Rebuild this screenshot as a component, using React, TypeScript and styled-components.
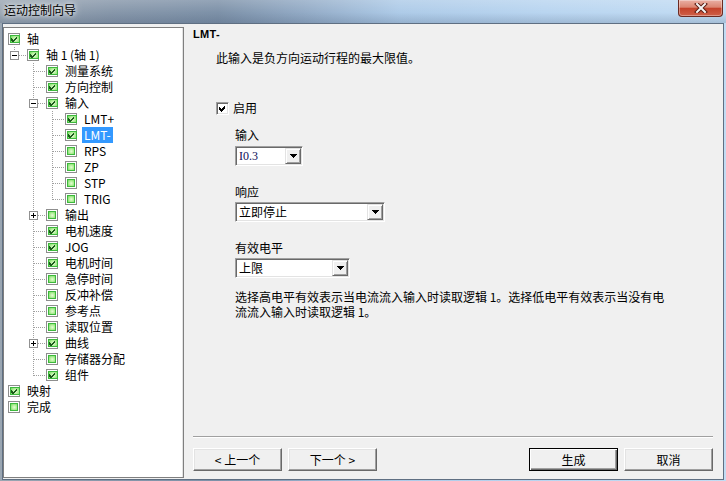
import React from "react";
import styled, { createGlobalStyle, css } from "styled-components";

const GlobalStyle = createGlobalStyle`
  html, body {
    margin: 0;
    padding: 0;
  }
  body {
    width: 726px;
    height: 481px;
    overflow: hidden;
    font-family: "Noto Sans CJK SC", "Liberation Sans", sans-serif;
    font-size: 12px;
    color: #000;
  }
`;

type TreeNode = {
  label: string;
  level: number;
  checked: boolean;
  exp?: "+" | "-";
  selected?: boolean;
};

const nodes: TreeNode[] = [
  { label: "轴", level: 0, checked: true },
  { label: "轴 1 (轴 1)", level: 1, checked: true, exp: "-" },
  { label: "测量系统", level: 2, checked: true },
  { label: "方向控制", level: 2, checked: true },
  { label: "输入", level: 2, checked: true, exp: "-" },
  { label: "LMT+", level: 3, checked: true },
  { label: "LMT-", level: 3, checked: true, selected: true },
  { label: "RPS", level: 3, checked: false },
  { label: "ZP", level: 3, checked: false },
  { label: "STP", level: 3, checked: false },
  { label: "TRIG", level: 3, checked: false },
  { label: "输出", level: 2, checked: false, exp: "+" },
  { label: "电机速度", level: 2, checked: true },
  { label: "JOG", level: 2, checked: true },
  { label: "电机时间", level: 2, checked: true },
  { label: "急停时间", level: 2, checked: false },
  { label: "反冲补偿", level: 2, checked: false },
  { label: "参考点", level: 2, checked: false },
  { label: "读取位置", level: 2, checked: false },
  { label: "曲线", level: 2, checked: true, exp: "+" },
  { label: "存储器分配", level: 2, checked: false },
  { label: "组件", level: 2, checked: true },
  { label: "映射", level: 0, checked: true },
  { label: "完成", level: 0, checked: false },
];

// true when a later row sits at the same level before the branch closes
const hasNextSibling = (i: number, lvl: number) => {
  for (let j = i + 1; j < nodes.length; j++) {
    if (nodes[j].level < lvl) return false;
    if (nodes[j].level === lvl) return true;
  }
  return false;
};

const App = () => {
  return (
    <>
      <GlobalStyle />
      <Window>
        <TitleBar>
          <Title>运动控制向导</Title>
          <CloseButton>
            <svg width="14" height="10" viewBox="0 0 14 10">
              <path d="M3 1 L11 9 M11 1 L3 9" stroke="#5b1d14" strokeWidth="4" strokeLinecap="square" />
              <path d="M3 1 L11 9 M11 1 L3 9" stroke="#f4f4f4" strokeWidth="2" strokeLinecap="square" />
            </svg>
          </CloseButton>
        </TitleBar>

        <Client>
          <Tree>
            {nodes.map((n, i) => (
              <Row key={i}>
                {Array.from({ length: n.level }).map((_, k) => {
                  const own = k === n.level - 1;
                  if (own) {
                    return (
                      <Connector
                        key={k}
                        line={hasNextSibling(i, n.level) ? "full" : "top"}
                        branch
                        exp={n.exp}
                      />
                    );
                  }
                  return <Connector key={k} line={hasNextSibling(i, k + 1) ? "full" : "none"} />;
                })}
                <StateBox>
                  <StateFill>
                    {n.checked && (
                      <svg width="8" height="8" viewBox="0 0 8 8" shapeRendering="crispEdges">
                        <polygon points="0,3 2,5 6,1 6,3.5 2,7.5 0,5.5" fill="#1c5a1c" />
                      </svg>
                    )}
                  </StateFill>
                </StateBox>
                <NodeLabel $selected={n.selected}>{n.label}</NodeLabel>
              </Row>
            ))}
          </Tree>

          <Main>
            <Heading>LMT-</Heading>
            <Content>
              <Description>此输入是负方向运动行程的最大限值。</Description>
              <CheckRow>
                <CheckBox>
                  <svg width="9" height="9" viewBox="0 0 9 9" shapeRendering="crispEdges">
                    <polygon points="1,3 3,5 7,1 7,4 3,8 1,6" fill="#000" />
                  </svg>
                </CheckBox>
                <span>启用</span>
              </CheckRow>

              <Group>
                <FieldLabel $gap={11}>输入</FieldLabel>
                <Combo $w={68} $gap={3}>
                  <ComboText $latin>I0.3</ComboText>
                  <DropButton />
                </Combo>

                <FieldLabel $gap={18}>响应</FieldLabel>
                <Combo $w={150} $gap={2}>
                  <ComboText>立即停止</ComboText>
                  <DropButton />
                </Combo>

                <FieldLabel $gap={18}>有效电平</FieldLabel>
                <Combo $w={115} $gap={2}>
                  <ComboText>上限</ComboText>
                  <DropButton />
                </Combo>

                <Note>
                  选择高电平有效表示当电流流入输入时读取逻辑 1。选择低电平有效表示当没有电流流入输入时读取逻辑 1。
                </Note>
              </Group>
            </Content>

            <Spacer />
            <Separator />
            <ButtonRow>
              <Button>&lt; 上一个</Button>
              <Button>下一个 &gt;</Button>
              <Spacer />
              <Button $default>生成</Button>
              <Button>取消</Button>
            </ButtonRow>
          </Main>
        </Client>
      </Window>
    </>
  );
};

export default App;

const Connector = ({
  line,
  branch,
  exp,
}: {
  line: "none" | "full" | "top";
  branch?: boolean;
  exp?: "+" | "-";
}) => (
  <Cell>
    <svg width="19" height="16" viewBox="0 0 19 16" shapeRendering="crispEdges">
      {line !== "none" && (
        <line
          x1="6.5"
          y1="0"
          x2="6.5"
          y2={line === "full" ? 16 : 9}
          stroke="#a0a0a0"
          strokeDasharray="1 1"
        />
      )}
      {branch && (
        <line x1="7" y1="8.5" x2="19" y2="8.5" stroke="#a0a0a0" strokeDasharray="1 1" />
      )}
      {exp && (
        <g>
          <rect x="2.5" y="4.5" width="8" height="8" fill="#fff" stroke="#919191" />
          <line x1="4" y1="8.5" x2="9" y2="8.5" stroke="#000" />
          {exp === "+" && <line x1="6.5" y1="6" x2="6.5" y2="11" stroke="#000" />}
        </g>
      )}
    </svg>
  </Cell>
);

const DropButton = () => (
  <ArrowButton>
    <svg width="7" height="4" viewBox="0 0 7 4" shapeRendering="crispEdges">
      <polygon points="0,0 7,0 3.5,4" fill="#000" />
    </svg>
  </ArrowButton>
);

const Window = styled.div`
  width: 726px;
  height: 481px;
  box-sizing: border-box;
  display: flex;
  flex-direction: column;
  padding: 0 2px 1px 2px;
  background: linear-gradient(
    90deg,
    #9aa6b2 0%,
    #8797aa 15%,
    #7d91a8 30%,
    #93abc6 42%,
    #aecbe8 55%,
    #b9d5f0 75%,
    #c2dcf3 100%
  );
`;

const TitleBar = styled.div`
  height: 23px;
  display: flex;
  justify-content: space-between;
  align-items: flex-start;
  margin: 0 -2px;
  padding: 0 3px 0 4px;
  background: linear-gradient(
      180deg,
      rgba(255, 255, 255, 0.18) 0%,
      rgba(255, 255, 255, 0) 55%,
      rgba(40, 60, 90, 0.18) 100%
    ),
    linear-gradient(
      90deg,
      #9aa6b2 0%,
      #8797aa 15%,
      #7d91a8 30%,
      #93abc6 42%,
      #aecbe8 55%,
      #b9d5f0 75%,
      #c2dcf3 100%
    );
`;

const Title = styled.div`
  line-height: 20px;
  font-size: 12px;
  color: #000;
  text-shadow: 0 0 4px #fff, 0 0 8px rgba(255, 255, 255, 0.85);
`;

const CloseButton = styled.div`
  width: 45px;
  height: 17px;
  box-sizing: border-box;
  border: 1px solid #6b2a22;
  border-top: none;
  border-radius: 0 0 4px 4px;
  background: linear-gradient(180deg, #eab0a4 0%, #db8571 45%, #c4432b 52%, #cf6049 100%);
  box-shadow: inset 0 0 0 1px rgba(255, 255, 255, 0.35);
  display: flex;
  align-items: center;
  justify-content: center;
`;

const Client = styled.div`
  flex: 1;
  display: flex;
  min-height: 0;
  background: #f0f0f0;
  border: 1px solid #5f6f82;
`;

const Tree = styled.div`
  width: 181px;
  box-sizing: border-box;
  margin: 3px 0 1px 0;
  padding: 3px 0 0 4px;
  background: #fff;
  border: 1px solid #7f7f7f;
  box-shadow: inset -1px 0 0 #e3e3e3;
  display: flex;
  flex-direction: column;
`;

const Row = styled.div`
  height: 16px;
  display: flex;
  align-items: center;
  white-space: nowrap;
`;

const Cell = styled.span`
  width: 19px;
  height: 16px;
  flex: none;
  display: block;

  svg {
    display: block;
  }
`;

const StateBox = styled.span`
  width: 12px;
  height: 12px;
  box-sizing: border-box;
  flex: none;
  margin-right: 5px;
  padding: 1px;
  display: flex;
  border: 1px solid #8e8e8e;
  background: #fff;
`;

const StateFill = styled.span`
  flex: 1;
  box-sizing: border-box;
  border: 1px solid #3db83d;
  background: radial-gradient(circle at 55% 55%, #e4fcd8 0%, #b5f09c 45%, #6fd85c 100%);
  display: flex;
  align-items: center;
  justify-content: center;

  svg {
    display: block;
  }
`;

const NodeLabel = styled.span<{ $selected?: boolean }>`
  padding: 0 2px;
  line-height: 16px;
  height: 16px;
  font-size: 12px;
  color: #000;
  ${(p) =>
    p.$selected &&
    css`
      background: #3399ff;
      color: #fff;
    `}
`;

const Main = styled.div`
  flex: 1;
  display: flex;
  flex-direction: column;
  padding: 3px 10px 8px 9px;
`;

const Heading = styled.div`
  font-family: "Liberation Sans", sans-serif;
  font-weight: bold;
  font-size: 11px;
  line-height: 14px;
  letter-spacing: 0.3px;
`;

const Content = styled.div`
  margin-left: 23px;
  display: flex;
  flex-direction: column;
  align-items: flex-start;
`;

const Description = styled.div`
  margin-top: 9px;
  line-height: 16px;
`;

const CheckRow = styled.div`
  margin-top: 34px;
  height: 16px;
  display: flex;
  align-items: center;
  gap: 4px;
  line-height: 16px;
`;

const CheckBox = styled.span`
  width: 13px;
  height: 13px;
  box-sizing: border-box;
  border-top: 1px solid #a0a0a0;
  border-left: 1px solid #a0a0a0;
  border-bottom: 1px solid #fff;
  border-right: 1px solid #fff;
  box-shadow: inset 1px 1px 0 #696969, inset -1px -1px 0 #e3e3e3;
  background: #fff;
  display: flex;
  align-items: center;
  justify-content: center;

  svg {
    display: block;
  }
`;

const Group = styled.div`
  margin-left: 19px;
  display: flex;
  flex-direction: column;
  align-items: flex-start;
`;

const FieldLabel = styled.div<{ $gap: number }>`
  margin-top: ${(p) => p.$gap}px;
  line-height: 16px;
`;

const Combo = styled.div<{ $w: number; $gap: number }>`
  width: ${(p) => p.$w}px;
  height: 20px;
  margin-top: ${(p) => p.$gap}px;
  box-sizing: border-box;
  display: flex;
  padding: 1px;
  background: #fff;
  border-top: 1px solid #a0a0a0;
  border-left: 1px solid #a0a0a0;
  border-bottom: 1px solid #fff;
  border-right: 1px solid #fff;
  box-shadow: inset 1px 1px 0 #696969, inset -1px -1px 0 #e3e3e3;
`;

const ComboText = styled.span<{ $latin?: boolean }>`
  flex: 1;
  padding-left: 2px;
  line-height: 16px;
  font-size: 12px;
  ${(p) =>
    p.$latin &&
    css`
      font-family: "Liberation Serif", serif;
      font-size: 12px;
      color: #10105a;
    `}
`;

const ArrowButton = styled.span`
  width: 16px;
  height: 16px;
  box-sizing: border-box;
  background: #f0f0f0;
  border: 1px solid;
  border-color: #e3e3e3 #696969 #696969 #e3e3e3;
  box-shadow: inset 1px 1px 0 #fff, inset -1px -1px 0 #a0a0a0;
  display: flex;
  align-items: center;
  justify-content: center;

  svg {
    display: block;
  }
`;

const Note = styled.div`
  width: 440px;
  margin-top: 11px;
  line-height: 15px;
`;

const Spacer = styled.div`
  flex: 1;
`;

const Separator = styled.div`
  height: 0;
  border-top: 1px solid #a0a0a0;
  border-bottom: 1px solid #fff;
`;

const ButtonRow = styled.div`
  margin-top: 10px;
  display: flex;
  gap: 6px;
`;

const Button = styled.button<{ $default?: boolean }>`
  width: 89px;
  height: 23px;
  box-sizing: border-box;
  margin: 0;
  padding: 0;
  font-family: "Noto Sans CJK SC", sans-serif;
  font-size: 12px;
  line-height: 16px;
  color: #000;
  background: #f0f0f0;
  border: 1px solid;
  border-color: #fff #696969 #696969 #fff;
  box-shadow: inset -1px -1px 0 #a0a0a0, inset 1px 1px 0 #e3e3e3;

  ${(p) =>
    p.$default &&
    css`
      border-color: #000;
      box-shadow: inset 1px 1px 0 #fff, inset -1px -1px 0 #696969, inset -2px -2px 0 #a0a0a0;
    `}
`;
